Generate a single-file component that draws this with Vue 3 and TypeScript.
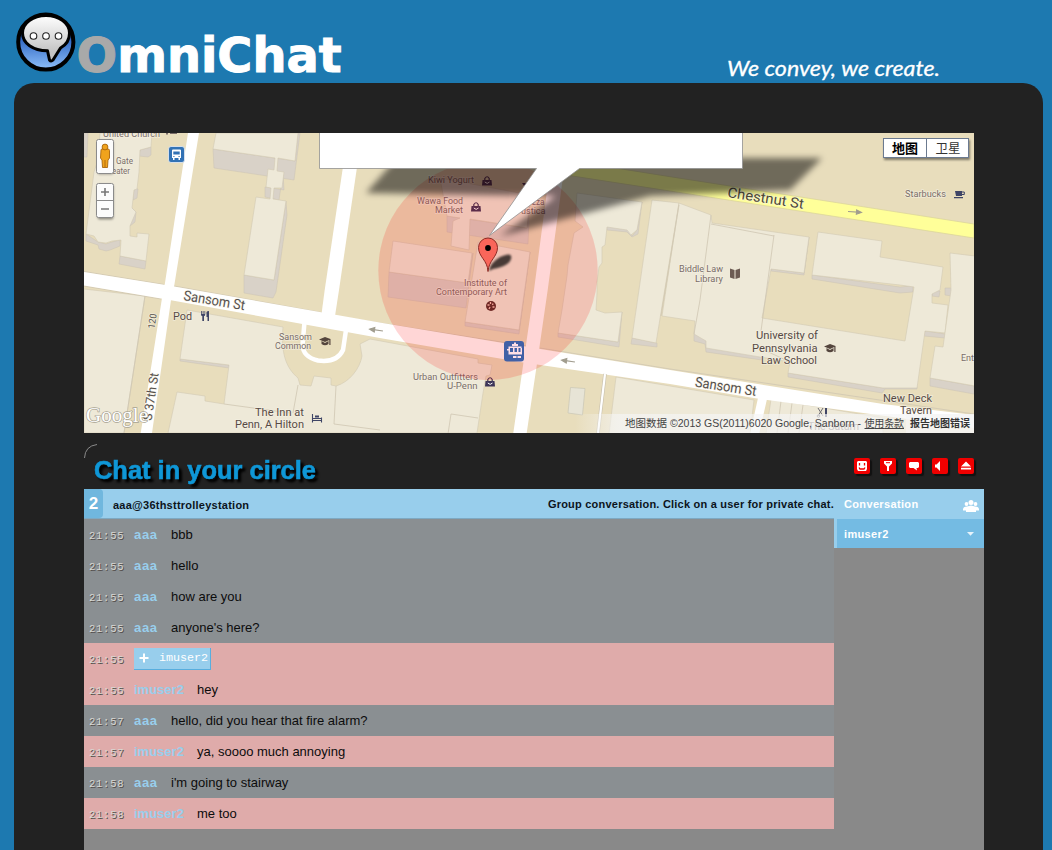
<script setup lang="ts">
interface MapLabel {
  t: string
  x: number
  y: number
  w: number
  s: number
  r?: number
  c?: string
}

interface Message {
  time: string
  user: string
  text?: string
  join?: boolean
}

const labels: MapLabel[] = [
  { t: 'United Church', x: 103, y: 137, w: 57, s: 9.5 },
  { t: 'Gate', x: 116, y: 164, w: 17, s: 9 },
  { t: 'eater', x: 112, y: 174, w: 18, s: 9 },
  { t: 'Pod', x: 173, y: 320, w: 19, s: 11.5, c: '#574a45' },
  { t: 'Sansom St', x: 183, y: 300, w: 62, s: 14, r: 9.5, c: '#55504c' },
  { t: '120', x: 154.5, y: 329, w: 15, s: 9.5, r: -82, c: '#55504c' },
  { t: 'S 37th St', x: 151.5, y: 421, w: 48, s: 12.5, r: -81.5, c: '#55504c' },
  { t: 'Sansom', x: 279, y: 339.5, w: 33, s: 9.5 },
  { t: 'Common', x: 275, y: 348.5, w: 36, s: 9.5 },
  { t: 'The Inn at', x: 255, y: 416, w: 49, s: 11.5, c: '#574a45' },
  { t: 'Penn, A Hilton', x: 235, y: 428, w: 69, s: 11.5, c: '#574a45' },
  { t: 'Kiwi Yogurt', x: 428, y: 183, w: 46, s: 9.5 },
  { t: 'Wawa Food', x: 417, y: 204, w: 46, s: 9.5 },
  { t: 'Market', x: 435, y: 213, w: 28, s: 9.5 },
  { t: 'zza', x: 532, y: 205, w: 12.5, s: 9.5 },
  { t: 'ustica', x: 521, y: 214, w: 24.5, s: 9.5 },
  { t: 'Institute of', x: 464, y: 286, w: 43, s: 9.5 },
  { t: 'Contemporary Art', x: 436, y: 295, w: 71, s: 9.5 },
  { t: 'Urban Outfitters', x: 413, y: 379.5, w: 65, s: 9.5 },
  { t: 'U-Penn', x: 447, y: 389, w: 30.5, s: 9.5 },
  { t: 'Chestnut St', x: 727, y: 197, w: 77, s: 14, r: 8.8, c: '#4f4a35' },
  { t: 'Starbucks', x: 905, y: 197, w: 41, s: 9.5 },
  { t: 'Biddle Law', x: 679, y: 272, w: 44, s: 9.5 },
  { t: 'Library', x: 695, y: 282, w: 28, s: 9.5 },
  { t: 'University of', x: 756, y: 339, w: 62, s: 11.5, c: '#574a45' },
  { t: 'Pennsylvania', x: 752, y: 352, w: 65.5, s: 11.5, c: '#574a45' },
  { t: 'Law School', x: 761, y: 364, w: 56, s: 11.5, c: '#574a45' },
  { t: 'Ent', x: 961, y: 361, w: 13, s: 9.5 },
  { t: 'New Deck', x: 883, y: 402, w: 49, s: 11.5, c: '#574a45' },
  { t: 'Tavern', x: 900, y: 414, w: 32, s: 11.5, c: '#574a45' },
  { t: 'Sansom St', x: 694.5, y: 386.5, w: 62, s: 14, r: 8.8, c: '#55504c' },
  { t: 'The Saturn', x: 808, y: 430, w: 51, s: 11.5 },
]

const bags: [number, number][] = [[482, 176], [471, 202], [485, 377]]
const caps: [number, number][] = [[325, 341], [830, 348]]
const arrows: string[] = [
  'translate(376 330) rotate(188)',
  'translate(568 361) rotate(188)',
  'translate(855 212) rotate(4)',
]

const messages: Message[] = [
  { time: '21:55', user: 'aaa', text: 'bbb' },
  { time: '21:55', user: 'aaa', text: 'hello' },
  { time: '21:55', user: 'aaa', text: 'how are you' },
  { time: '21:55', user: 'aaa', text: "anyone's here?" },
  { time: '21:55', user: 'imuser2', join: true },
  { time: '21:55', user: 'imuser2', text: 'hey' },
  { time: '21:57', user: 'aaa', text: 'hello, did you hear that fire alarm?' },
  { time: '21:57', user: 'imuser2', text: 'ya, soooo much annoying' },
  { time: '21:58', user: 'aaa', text: "i'm going to stairway" },
  { time: '21:58', user: 'imuser2', text: 'me too' },
]
</script>

<template>
  <div class="page">
    <header class="top">
      <svg class="brand" width="350" height="83" viewBox="0 0 350 83">
        <defs>
          <linearGradient id="orb" x1="0" y1="0" x2="0" y2="1">
            <stop offset="0.4" stop-color="#2a62c0" />
            <stop offset="1" stop-color="#8fc0fa" />
          </linearGradient>
          <linearGradient id="bubble" x1="0" y1="0" x2="0" y2="1">
            <stop offset="0" stop-color="#ffffff" />
            <stop offset="0.8" stop-color="#c4c4c4" />
          </linearGradient>
        </defs>
        <circle cx="45.800" cy="42" r="27.600" fill="url(#orb)" stroke="#000" stroke-width="4" />
        <path d="M46 15.500C33 15.500 22.500 23 22.500 33C22.500 43.500 33 50.500 47.500 50.800L49.500 60Q51 62 53 60L60.500 48C66 45 69.500 39.500 69.500 33C69.500 23 59 15.500 46 15.500Z" fill="url(#bubble)" stroke="#000" stroke-width="3" stroke-linejoin="round" />
        <g fill="#fff" stroke="#222" stroke-width="1.100">
          <circle cx="33.500" cy="36" r="3.300" />
          <circle cx="46" cy="36" r="3.300" />
          <circle cx="58.500" cy="36" r="3.300" />
        </g>
        <text class="wordmark" x="76.500" y="72" textLength="265" lengthAdjust="spacingAndGlyphs"><tspan class="initial">O</tspan>mniChat</text>
      </svg>
      <svg class="tagline" width="230" height="40" viewBox="0 0 230 40">
        <text x="5" y="33" textLength="213" lengthAdjust="spacingAndGlyphs">We convey, we create.</text>
      </svg>
    </header>

    <main class="panel">
      <svg class="map" width="890" height="300" viewBox="84 133 890 300">
        <defs>
          <filter id="soft" x="-10%" y="-50%" width="120%" height="200%">
            <feGaussianBlur stdDeviation="3" />
          </filter>
          <filter id="tiny" x="-40%" y="-40%" width="180%" height="180%">
            <feGaussianBlur stdDeviation="1" />
          </filter>
          <linearGradient id="fade">
            <stop offset="0" stop-color="#f5f5f5" stop-opacity="0" />
            <stop offset="0.13" stop-color="#f5f5f5" stop-opacity="0.68" />
            <stop offset="1" stop-color="#f5f5f5" stop-opacity="0.68" />
          </linearGradient>
        </defs>
        <rect x="84" y="133" width="890" height="300" fill="#e8ddbc" />

        <!-- wall sides of the buildings -->
        <g fill="#d9d2c8" stroke="#cbc3b4" stroke-width="0.5">
          <path d="M84 133H88L87 157H84Z" />
          <path d="M86 234L98 242L106 244L112 242L120 240L120 246L110 250L106 251L99 249L98 245L86 241Z" />
          <path d="M120 256L146 261L145 269L119 264Z" />
          <path d="M140 150L151 147V155L148 157L139 156ZM134 188L138 189L137 198L133 200ZM132 208L136 212L135 222L130 226Z" />
          <path d="M213 149L295 161L298 133H300L294 180L214 168Z" />
          <path d="M265 187L284 190L283 172L279 200L265 197Z" />
          <path d="M244 275L274 280L286 201L287 215L276 292L273 298L244 293Z" />
          <path d="M389 272L468 283L473 253L466 308L388 297Z" />
          <path d="M447 216L527 228L530 195L528 244L447 232Z" />
          <path d="M465 322L519 330L530 252L519 334L465 326Z" />
          <path d="M180 359L229 365L229 368L180 361Z" />
          <path d="M558 333L618 342L622 312L619 347L607 345L558 337Z" />
          <path d="M606 225L629 228L632 236L637 230L642 202L638 234L632 237L627 232L607 230Z" />
          <path d="M632 338L657 343V347L631 344Z" />
          <path d="M694 334L762 349V360L706 352L705 344L694 341Z" />
          <path d="M771 269L804 273L809 237L804 275L771 271Z" />
          <path d="M812 275L900 287L913 286V292L900 293L812 279Z" />
          <path d="M788 373L883 388L917 384V389L885 389L882 393L788 377Z" />
          <path d="M925 331L945 334V338L924 336ZM932 290L940 291L939 297L932 296ZM945 288H952V296L945 295Z" />
          <path d="M930 378L974 386V394L930 386Z" />
        </g>

        <!-- roofs -->
        <g fill="#eee9d8" stroke="#d2cab4" stroke-width="0.6">
          <path d="M100 133H152L151 147L140 150L139 172L137 189L134 190L132 208L136 212L130 226V236L137 237V233L149 234L146 261L120 256L121 240L112 241L106 243L98 242L94 236L86 234L94 172L98 160Z" />
          <path d="M216 133H298L295 161L278 158L277 171L284 172L282 188L274 188L273 199L286 201L274 280L244 275L256 197L270 199L271 188L266 187L268 169L274 170L275 158L213 149Z" />
          <path d="M393 241L472 253L468 283L389 272Z" />
          <path d="M440 178L530 195L527 228L470 219L469 250L451 246L453 221L460 218L447 216Z" />
          <path d="M478 242L530 252L519 330L465 322Z" />
          <path d="M577 193L642 202L637 230L631 235L627 230L607 227L605 245L602 247L602 263L599 267L597 282V293L596 310L605 313L622 312L618 342L558 333L562 310L567 276L568 265L574 233L583 227L575 221Z" />
          <path d="M652 200L679 203L656 343L632 338Z" />
          <path d="M679 203L711 215L712 223L809 237L804 273L771 269L762 318L905 341L914 287L900 285L812 275L818 232L882 241L880 257L943 267L940 290L932 294V303L948 305L945 333L925 331L917 388H883L788 373L790 362L706 348V341L694 334L695 321L662 316Z" />
          <path d="M950 253L975 256V386L930 378L935 346L943 347L951 290Z" />
          <path d="M84 289L145 296L124 433H84Z" />
          <path d="M187 310L283 327C281 352 285 367 298 378L300 385L311 386L314 376L331 378V385L336 386C350 382 360 368 362 356L360 344L370 339L478 359V363L492 365L490 375L486 376L483 393L477 433H168L177 392L205 396V401L224 404L229 365L180 359Z" />
          <path d="M616 377L754 400L750 434H609Z" />
          <path d="M771 399L883 418V434H766Z" />
        </g>
        <g fill="none" stroke="#cfc7b2" stroke-width="0.8">
          <path d="M711 215L700 300L694 334M774 235L761 331M679 205L661 316M711 224L774 236M762 349L790 362M448 434L451 414L478 418M336 386L334 424L380 430M298 385L293 413M224 404L290 413M781 401L777 433M792 403L788 433M803 405L799 433M145 296L124 433" />
          <path d="M84 271.500L164 284.500M174 286L324 313M335 316L527 346M540 348L670 369L974 414M84 286L161 299" />
        </g>
        <path d="M570.500 387.500L585 388.500L582.500 415L568 413Z" fill="#e7e4d6" stroke="#c9c5b4" stroke-width="0.7" />

        <!-- streets -->
        <g fill="#fff">
          <path d="M188 133H199L174 287L171 300L152 433H140.700L161.700 300L164.700 284.700Z" />
          <path d="M348 133H362L339 290L334.700 318H321L324.700 290Z" />
          <path d="M551 160L565 162L547.700 290L539.300 348L526.700 433H513.300L526.700 340L534 290Z" />
          <path d="M84 272L164 284.700L384 323.300L503 343L670 370L883 404L974 415V428L760 399L670 384L520 362L384 338.700L164 299L84 285.500Z" />
          <path d="M758 398L767 399L759 434H750Z" />
        </g>
        <path d="M304.500 322L302.500 345Q303 357 318 360.500Q337 363 343 350L346 330" fill="none" stroke="#fff" stroke-width="4.500" />
        <path d="M605 374L598 433" stroke="#c9c1ae" stroke-width="3.500" />
        <path d="M605 374L598 433" stroke="#fff" stroke-width="2.200" />
        <path d="M540 156L670 176.700L974 224V238L670 191L540 171Z" fill="#ffff99" stroke="#dcd69c" stroke-width="0.8" />

        <g v-for="a in arrows" :key="a" :transform="a" stroke="#a19d8f" fill="#a19d8f" stroke-width="1.100">
          <path d="M-7 0H6M1.500 -2.200L6.500 0L1.500 2.200Z" />
        </g>

        <!-- place names -->
        <text
          v-for="l in labels"
          :key="l.t + l.x"
          class="place"
          :x="l.x"
          :y="l.y"
          :font-size="l.s"
          :fill="l.c ?? '#7a6d68'"
          :textLength="l.w"
          lengthAdjust="spacingAndGlyphs"
          :transform="l.r ? `rotate(${l.r} ${l.x} ${l.y})` : undefined"
        >{{ l.t }}</text>
        <path d="M166 133H168V134.500H166ZM170 133H177V134H170Z" fill="#7a6d68" />

        <!-- place icons -->
        <g v-for="b in bags" :key="b.join()" :transform="`translate(${b[0]} ${b[1]})`">
          <path d="M0.500 4H9.500L10 9.500H0Z" fill="#3c3558" />
          <path d="M2.800 4V2.500Q5.200 -1 7.200 2.500V4" fill="none" stroke="#3c3558" stroke-width="1.200" />
          <path d="M2.800 6Q5.200 8.800 7.500 6" fill="none" stroke="#fff" stroke-width="1" />
        </g>
        <g v-for="c in caps" :key="c.join()" :transform="`translate(${c[0]} ${c[1]})`" fill="#54453d">
          <path d="M-6 -1.500L0 -4L5.500 -2V4H4.300V-1L0 1Z" />
          <path d="M-3.500 0L0 2L3.500 0V3Q0 5.500 -3.500 3Z" />
        </g>
        <path d="M201 311V314.500Q201 316 202.300 316V321H204V316Q205.200 316 205.200 314.500V311H204.500V314H203.500V311H202.700V314H201.800V311ZM206.500 312Q207 311 209 311V321H207.500V317H206.500Z" fill="#3f4566" />
        <path d="M312.500 414V422.500M312 420.500H322M321.500 417.500V422.500M312 418.500H322" fill="none" stroke="#3f4566" stroke-width="1.100" />
        <path d="M315 415.500H319V417.500H315Z" fill="#3f4566" />
        <circle cx="491" cy="306" r="5" fill="#54302c" />
        <path d="M487.500 305H489.500M490.500 302V304M493 303.500L492.500 305M494.500 307H492.500M490 307L489 309" stroke="#f3c4b6" stroke-width="1.300" />
        <path d="M522 183H527L525 187Z" fill="#3c3558" />
        <path d="M730 268.500L734.500 270V279L730 277.500ZM735.500 270L740 268.500V277.500L735.500 279Z" fill="#6c5b52" />
        <path d="M955 191H962V196H956ZM954 197H963V198.300H954Z" fill="#3f4566" />
        <path d="M962 192H964.300V194.500H962" fill="none" stroke="#3f4566" />
        <path d="M818 408L823 416M823 408L818 416" stroke="#6c6a70" stroke-width="1" />
        <path d="M825 408H827V417H825Z" fill="#3f4566" />
        <circle cx="818.500" cy="416" r="1.300" fill="none" stroke="#6c6a70" />

        <rect x="168.500" y="146.500" width="16" height="16" rx="2.500" fill="#3272b5" stroke="#e9eef5" stroke-width="0.8" />
        <path d="M172 150.500Q172 149.500 173 149.500H180Q181 149.500 181 150.500V158H180V160H178.500V158H174.500V160H173V158H172Z" fill="#fff" />
        <path d="M173.300 151.500H179.700V154.500H173.300ZM173.300 156H174.500V157H173.300ZM178.500 156H179.700V157H178.500Z" fill="#3272b5" />

        <!-- search radius, balloon shadow, balloon, pin -->
        <circle cx="488" cy="270.500" r="109.700" fill="#ff0000" fill-opacity="0.16" />

        <rect x="504" y="341" width="20" height="20.500" rx="3" fill="#4160a6" />
        <path d="M512 344H514V342.500H516V344H518V346H512ZM508.500 346.500H521.500V348H508.500ZM508.500 348H510V352H508.500ZM513 348H514.500V352H513ZM517 348H518.500V352H517ZM520.500 348H522V352H520.500ZM508.500 352H522V354.500H508.500ZM513 356H516.500V358H513ZM517.500 356H521V358H517.500ZM507 349H509V350.500H507Z" fill="#ffdfe6" />

        <path d="M366 193L397 158H822L790 190L650 196L500 236L556 196Z" fill="#000" fill-opacity="0.52" filter="url(#soft)" />
        <path d="M319.500 130V168.500H536.500L489.500 235.500L579.500 168.500H742.500V130Z" fill="#fff" stroke="#8f8f8f" stroke-width="0.8" />
        <path d="M489 271Q490 263 500 257Q513 251 511 259Q509 266 493 269Z" fill="#000" fill-opacity="0.7" filter="url(#tiny)" />
        <path d="M488 271.500C487.500 260 478.500 257 478.500 247.500A9.500 9.500 0 0 1 497.500 247.500C497.500 257 488.800 260 488 271.500Z" fill="#f9665a" stroke="#8c2a24" />
        <circle cx="488" cy="248" r="2.900" fill="#000" />

        <!-- street view and zoom controls -->
        <g stroke="#8b8b8b">
          <rect x="97.500" y="140.500" width="16" height="34" rx="2" fill="#000" fill-opacity="0.3" stroke="none" filter="url(#tiny)" />
          <rect x="96.500" y="139.500" width="17" height="34" rx="2" fill="#fcfcfc" />
          <rect x="97.500" y="184.500" width="16" height="35" rx="2" fill="#000" fill-opacity="0.4" stroke="none" filter="url(#tiny)" />
          <rect x="96.500" y="183.500" width="17" height="34" rx="2" fill="#fcfcfc" />
          <path d="M97 200.500H113" />
          <path d="M101 192H109M105 188V196M101 209H109" stroke="#777" stroke-width="1.600" />
        </g>
        <g fill="#f0a31c" stroke="#a8650c" stroke-width="0.9">
          <path d="M101 150Q101 149 102 149H108Q109.500 149 109.500 150.500V158L108 160L107.500 167.500H102.500L102 160L100.500 158Z" />
          <circle cx="105" cy="147" r="2.900" />
          <path d="M105 160V167" />
        </g>

        <rect x="884" y="140" width="86" height="20" fill="#000" fill-opacity="0.45" filter="url(#tiny)" />
        <rect x="883.500" y="138.500" width="85" height="19" fill="#fff" stroke="#6b7a90" />
        <path d="M926.500 139V157" stroke="#6b7a90" />
        <text class="cjk" x="892" y="153" font-size="13" font-weight="700" fill="#000">地图</text>
        <text class="cjk" x="935.500" y="153" font-size="12.500" fill="#333">卫星</text>

        <!-- credits -->
        <text class="google" x="86" y="422" textLength="62" lengthAdjust="spacingAndGlyphs">Google</text>
        <rect x="575" y="414" width="331" height="19" fill="url(#fade)" />
        <rect x="906" y="414" width="68" height="19" fill="#f5f5f5" fill-opacity="0.88" />
        <text class="cjk" x="625" y="427" font-size="10.500" fill="#444" textLength="236" lengthAdjust="spacingAndGlyphs">地图数据 ©2013 GS(2011)6020 Google, Sanborn -</text>
        <text class="cjk" x="864.500" y="427" font-size="10" fill="#444" textLength="39.500" text-decoration="underline">使用条款</text>
        <text class="cjk" x="910" y="427" font-size="10" font-weight="700" fill="#333" textLength="60">报告地图错误</text>
      </svg>

      <section class="chat">
        <div class="chat-title">
          <svg class="heading" width="250" height="50" viewBox="84 439 250 50">
            <path d="M84.500 458Q85 446 97 444.500" fill="none" stroke="#8a8a8a" stroke-width="1" />
            <text x="94" y="479" textLength="222" lengthAdjust="spacingAndGlyphs">Chat in your circle</text>
          </svg>
          <div class="tools">
            <svg viewBox="0 0 16 16"><path d="M4 3H12L13 4V11L12 13H4L3 11V4Z" fill="#fff" /><path d="M5.500 5V7.500M10.500 5V7.500M5 9.500L6 11H10L11 9.500" fill="none" stroke="#f00000" stroke-width="1.300" /></svg>
            <svg viewBox="0 0 16 16"><path d="M4 3H12V5.500L9 8.500V13H7V8.500L4 5.500Z" fill="#fff" /><path d="M6 4.700H10" stroke="#f00000" /></svg>
            <svg viewBox="0 0 16 16"><path d="M4 4H12L13 5V9L12 10H10.500L11 12.500L7.500 10H4L3 9V5Z" fill="#fff" /></svg>
            <svg viewBox="0 0 16 16"><path d="M3 6.500H4.500L8 3V13L4.500 9.500H3Z" fill="#fff" /></svg>
            <svg viewBox="0 0 16 16"><path d="M8 3.500L13 8.500H3ZM3 9.800H13V11.500H3Z" fill="#fff" /></svg>
          </div>
        </div>

        <div class="chat-body">
          <div class="talk">
            <div class="talk-head">
              <span class="count">2</span>
              <span class="room">aaa@36thsttrolleystation</span>
              <span class="hint">Group conversation. Click on a user for private chat.</span>
            </div>
            <div v-for="(m, i) in messages" :key="i" class="row" :class="{ other: m.user === 'imuser2' }">
              <span class="time">{{ m.time }}</span>
              <span v-if="m.join" class="joined">
                <svg width="10" height="10" viewBox="0 0 10 10"><path d="M5 0.500V9.500M0.500 5H9.500" stroke="#fff" stroke-width="2" /></svg>
                {{ m.user }}
              </span>
              <template v-else>
                <span class="user">{{ m.user }}</span>
                <span class="msg">{{ m.text }}</span>
              </template>
            </div>
          </div>

          <aside class="side">
            <div class="side-head">
              <span>Conversation</span>
              <svg width="16" height="12" viewBox="0 0 16 12" fill="#fff">
                <circle cx="3.500" cy="4" r="1.900" /><circle cx="12.500" cy="4" r="1.900" /><circle cx="8" cy="2.500" r="2.500" />
                <path d="M0 9.500Q0 6.500 4 6.500L8 5.500L12 6.500Q16 6.500 16 9.500V10.500H13V12H3V10.500H0Z" />
              </svg>
            </div>
            <div class="side-user">
              <span>imuser2</span>
              <svg width="7" height="4" viewBox="0 0 7 4"><path d="M0 0H7L3.500 3.700Z" fill="#e6f3fb" /></svg>
            </div>
          </aside>
        </div>
      </section>
    </main>
  </div>
</template>

<style>
body {
  margin: 0;
  background: #1d79b0;
  overflow: hidden;
}
</style>

<style scoped>
.page {
  box-sizing: border-box;
  width: 1052px;
  height: 850px;
  overflow: hidden;
  display: flex;
  flex-direction: column;
  background: #1d79b0;
  font-family: 'Liberation Sans', Arial, sans-serif;
}
.top {
  flex: none;
  height: 83px;
  display: flex;
  justify-content: space-between;
  align-items: flex-end;
}
.brand,
.tagline {
  display: block;
}
.wordmark {
  font: 700 48px 'DejaVu Sans', Verdana, sans-serif;
  fill: #fff;
  stroke: #fff;
  stroke-width: 1px;
}
.initial {
  fill: #a9a9a9;
  stroke: #a9a9a9;
}
.tagline {
  margin-right: 100px;
}
.tagline text {
  font: italic 400 22px Lato, 'Open Sans', sans-serif;
  fill: #fff;
  stroke: #fff;
  stroke-width: 0.3px;
}
.panel {
  box-sizing: border-box;
  width: 1029px;
  margin-left: 14px;
  padding: 50px 0 0 70px;
  flex: 1;
  background: #222;
  border-radius: 20px 20px 0 0;
  display: flex;
  flex-direction: column;
}
.map {
  display: block;
  flex: none;
}
.place {
  font-family: Roboto, sans-serif;
  stroke: #f5f1e4;
  stroke-opacity: 0.7;
  stroke-width: 1.5px;
  paint-order: stroke;
}
.cjk {
  font-family: 'Liberation Sans', 'Noto Sans CJK SC', sans-serif;
}
.google {
  font: 400 21px 'Liberation Serif', serif;
  fill: #fff;
  stroke: #a9a493;
  stroke-width: 1.4px;
  paint-order: stroke;
}
.chat {
  width: 900px;
  flex: 1;
  display: flex;
  flex-direction: column;
}
.chat-title {
  flex: none;
  height: 56px;
  display: flex;
  align-items: flex-end;
  justify-content: space-between;
}
.heading {
  display: block;
  overflow: visible;
}
.heading text {
  font: 700 25px 'Liberation Sans', Arial, sans-serif;
  fill: #0f97d7;
  stroke: #0f97d7;
  stroke-width: 0.6px;
  filter: drop-shadow(3px 3px 1px #000);
}
.tools {
  display: flex;
  gap: 10px;
  margin: 0 10px 15px 0;
}
.tools svg {
  width: 16px;
  height: 16px;
  background: #f00000;
  border-radius: 2px;
  box-shadow: 2px 2px 1px #111;
}
.chat-body {
  flex: 1;
  display: flex;
}
.talk {
  width: 750px;
  background: #898989;
}
.talk-head {
  box-sizing: border-box;
  height: 30px;
  display: flex;
  align-items: center;
  background: #98ceec;
  border-bottom: 1px solid #7ea9c2;
  font-size: 11px;
  font-weight: 700;
  color: #0c141c;
}
.count {
  width: 19px;
  height: 29px;
  line-height: 29px;
  text-align: center;
  background: #70b7de;
  border-radius: 0 4px 4px 0;
  color: #fff;
  font-size: 17px;
}
.room {
  margin: 3px 0 0 10px;
  letter-spacing: 0.24px;
}
.hint {
  margin: 1px 0 0 auto;
  letter-spacing: 0.22px;
}
.row {
  height: 31px;
  display: flex;
  align-items: center;
  background: #8a8f92;
}
.row.other {
  background: #dfabaa;
}
.time {
  width: 45px;
  padding: 3px 0 0 5px;
  font: 10.5px/14px 'Liberation Mono', 'Courier New', monospace;
  letter-spacing: 0.75px;
  color: #d8d8d4;
  text-shadow: 1px 1px 0 #55504e;
}
.user {
  width: 24px;
  color: #98ceec;
  font-size: 13px;
  font-weight: 700;
  letter-spacing: 0.7px;
}
.row.other .user {
  width: 50px;
  letter-spacing: 0;
}
.msg {
  margin-left: 13px;
  color: #0c0c0c;
  font-size: 13px;
}
.joined {
  box-sizing: border-box;
  width: 77px;
  height: 22px;
  padding-left: 5px;
  display: flex;
  align-items: center;
  gap: 10px;
  background: #98ceec;
  border-right: 1px solid #58aede;
  border-bottom: 1px solid #58aede;
  color: #fff;
  font: 11.7px 'Liberation Mono', 'Courier New', monospace;
}
.side {
  width: 150px;
  background: #898989;
  font-size: 11px;
  font-weight: 700;
  letter-spacing: 0.35px;
  color: #fff;
}
.side-head,
.side-user {
  box-sizing: border-box;
  display: flex;
  align-items: center;
  justify-content: space-between;
}
.side-head {
  height: 30px;
  padding: 0 5px 0 10px;
  background: #98ceec;
}
.side-head svg {
  margin-top: 3px;
}
.side-user {
  height: 29px;
  padding: 0 10px 0 7px;
  background: #74bbe3;
  border-left: 3px solid #98ceec;
}
</style>
